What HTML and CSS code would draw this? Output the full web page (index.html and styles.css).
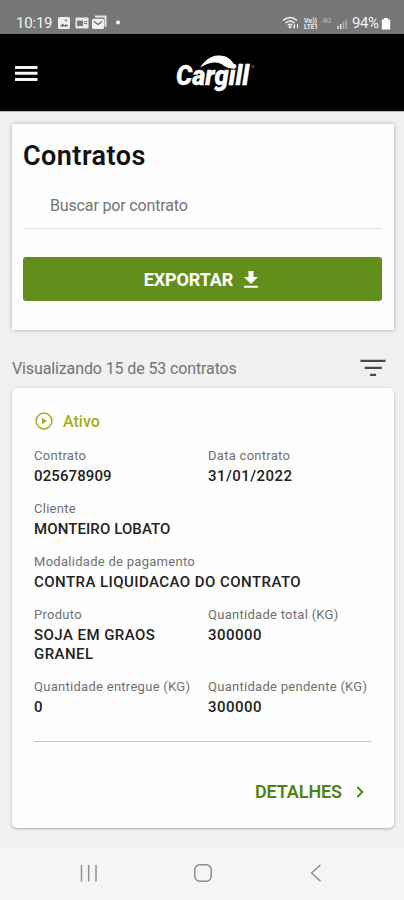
FILE: index.html
```html
<!DOCTYPE html>
<html lang="pt-BR">
<head>
<meta charset="UTF-8" />
<meta name="viewport" content="width=device-width, initial-scale=1" />
<title>Contratos</title>
<link rel="stylesheet" href="styles.css">
</head>
<body>

<div class="statusbar">
  <span class="clock">10:19</span>
  <svg class="status-icons" width="64" height="16" viewBox="0 0 64 16">
    <rect x="1" y="2" width="12" height="12" rx="1.5" fill="#eee" />
    <path d="M3 11.500l2.500-3 2 2 1.500-1.500 2.500 2.500z" fill="#666" />
    <circle cx="9" cy="5.500" r="1.100" fill="#777" />
    <rect x="18.500" y="2.500" width="13" height="11" rx="1" fill="#e8e8e8" />
    <path d="M20.500 6h5v4.500h-5zM27 6.500h3M27 8.500h3" fill="#777" stroke="#777" />
    <path d="M38 1.500h10.500v10" fill="none" stroke="#e8e8e8" stroke-width="2" />
    <rect x="35" y="3.800" width="12" height="10.200" rx="1.500" fill="#f2f2f2" />
    <path d="M37 6.500l4 3 4-3" fill="none" stroke="#666" stroke-width="1.300" />
    <circle cx="61" cy="7.500" r="2" fill="#fff" />
  </svg>
  <svg class="signal" width="68" height="16" viewBox="0 0 68 16">
    <g fill="none" stroke="#eee" stroke-width="1.500">
      <path d="M0 5.500q7-6 14 0M2.500 8q4.500-4 9 0M4.800 10.300q2.200-2 4.400 0" />
      <path d="M11.500 9v4M10 11.500l1.500 1.800M14.500 13v-4" stroke-width="1.100" />
    </g>
    <circle cx="7" cy="12" r="1.400" fill="#eee" />
    <text x="21" y="7.500" class="volte" textLength="13" lengthAdjust="spacingAndGlyphs">Vo))</text>
    <text x="21" y="14" class="volte" textLength="14" lengthAdjust="spacingAndGlyphs">LTE1</text>
    <text x="39.500" y="7.500" class="net" textLength="9" lengthAdjust="spacingAndGlyphs">4G</text>
    <path d="M55 11v3M57.700 9v5" stroke="#e0e0e0" stroke-width="1.600" />
    <path d="M60.500 6.500v7.500M63.200 4.500v9.500" stroke="#aaa" stroke-width="1.600" />
  </svg>
  <span class="percent">94%</span>
  <svg class="battery" width="10" height="12" viewBox="0 0 10 12">
    <path d="M3 0h4v1.500h2.200v10H.8v-10H3z" fill="#fff" />
  </svg>
</div>

<header class="topbar">
  <svg class="menu" width="23" height="17" viewBox="0 0 23 17">
    <path d="M0 2.400h22.500M0 8.300h22.500M0 14.600h22.500" stroke="#f4f4f4" stroke-width="3" />
  </svg>
  <svg class="logo" width="82" height="42" viewBox="0 0 82 42">
    <text x="1" y="32.800" class="logo-text" textLength="73" lengthAdjust="spacingAndGlyphs">Cargill</text>
    <path d="M25 15.500C30 8.500 35 3.900 43 3.500c9-.4 14.500 4 17.500 12.300-4.500 1.500-8 .4-12-2.400-4-2.800-7-3.400-11.500-2.700-4.500.8-7.500 2.500-12 4.800z" fill="#fff" />
    <circle cx="78" cy="14.500" r="1.100" fill="none" stroke="#777" stroke-width=".8" />
  </svg>
</header>

<main class="content">
  <section class="search-card">
    <h1>Contratos</h1>
    <div class="search"><span>Buscar por contrato</span></div>
    <button class="export"><span>EXPORTAR</span>
      <svg width="14" height="17" viewBox="0 0 14 17">
        <path d="M4.500 0h5v6H14l-7 7-7-7h4.500zM0 14.700h14v2H0z" fill="#fff" />
      </svg>
    </button>
  </section>

  <div class="summary">
    <span>Visualizando 15 de 53 contratos</span>
    <svg width="26" height="18" viewBox="0 0 26 18">
      <path d="M.5 1.800h25M4.800 8.800h17M10.200 15.800h5.800" stroke="#484848" stroke-width="2.300" />
    </svg>
  </div>

  <article class="contract">
    <div class="state">
      <svg width="18" height="18" viewBox="0 0 18 18">
        <circle cx="9" cy="9" r="7.900" fill="none" stroke="#a2ad1c" stroke-width="1.500" />
        <path d="M7 5.700v6.600l4.800-3.300z" fill="#a2ad1c" />
      </svg>
      <span>Ativo</span>
    </div>
    <dl class="fields">
      <div><dt>Contrato</dt><dd class="tight">025678909</dd></div>
      <div><dt>Data contrato</dt><dd>31/01/2022</dd></div>
      <div class="wide"><dt>Cliente</dt><dd class="tight">MONTEIRO LOBATO</dd></div>
      <div class="wide"><dt>Modalidade de pagamento</dt><dd>CONTRA LIQUIDACAO DO CONTRATO</dd></div>
      <div><dt>Produto</dt><dd>SOJA EM GRAOS<br>GRANEL</dd></div>
      <div><dt>Quantidade total (KG)</dt><dd>300000</dd></div>
      <div><dt>Quantidade entregue (KG)</dt><dd>0</dd></div>
      <div><dt>Quantidade pendente (KG)</dt><dd>300000</dd></div>
    </dl>
    <a class="details"><span>DETALHES</span>
      <svg width="8" height="12" viewBox="0 0 8 12">
        <path d="M1.300 1l5 5-5 5" fill="none" stroke="#4f8314" stroke-width="1.900" />
      </svg>
    </a>
  </article>
</main>

<nav class="navbar">
  <svg width="18" height="18" viewBox="0 0 18 18">
    <path d="M1.500 1v16.500M8.700 1v16.500M16 1v16.500" stroke="#909090" stroke-width="1.500" />
  </svg>
  <svg width="18" height="18" viewBox="0 0 18 18">
    <rect x=".8" y=".8" width="16.400" height="16.400" rx="5" fill="none" stroke="#8c8c8c" stroke-width="1.500" />
  </svg>
  <svg width="18" height="18" viewBox="0 0 18 18">
    <path d="M13.500 1l-9 8 9 8.300" fill="none" stroke="#8c8c8c" stroke-width="1.500" />
  </svg>
</nav>

</body>
</html>
```
FILE: styles.css
```css
* {
  box-sizing: border-box;
}

body {
  margin: 0;
  height: 900px;
  display: flex;
  flex-direction: column;
  overflow: hidden;
  background: #f0f0f0;
  font-family: Roboto, Arial, sans-serif;
}

svg {
  display: block;
  flex: none;
}

/* Phone status bar */
.statusbar {
  height: 34px;
  padding: 12px 13px 0 16px;
  display: flex;
  align-items: center;
  background: #777;
  color: #f2f2f2;
  font-size: 15px;
  line-height: 20px;
}
.clock {
  width: 41px;
  letter-spacing: -0.2px;
}
.signal {
  margin-left: auto;
}
.volte {
  font-size: 7px;
  font-weight: 700;
  fill: #eee;
}
.net {
  font-size: 7px;
  fill: #bbb;
}
.percent {
  margin-left: 1px;
  width: 29px;
  letter-spacing: -0.4px;
}
.battery {
  margin-top: 1px;
}

/* App header */
.topbar {
  height: 77px;
  padding: 0 15px;
  display: flex;
  align-items: center;
  background: #000;
}
.menu {
  margin-top: 2px;
}
.logo {
  margin-left: 137px;
}
.logo-text {
  font-family: Roboto, sans-serif;
  font-size: 27px;
  font-weight: 900;
  font-style: italic;
  fill: #fff;
  stroke: #fff;
  stroke-width: 0.3px;
}

.content {
  flex: 1;
  padding: 12px 10px 0 12px;
  border-top: 1px solid #b5b5b5;
}

/* Search card */
.search-card {
  height: 206px;
  padding: 15px 12px 0 11px;
  background: #fefefe;
  box-shadow: 0 0 4px rgba(0, 0, 0, 0.28);
}
h1 {
  margin: 0;
  font-size: 27px;
  line-height: 34px;
  font-weight: 600;
  letter-spacing: 0.45px;
  color: #111;
}
.search {
  height: 56px;
  padding: 21px 27px 0;
  border-bottom: 1px solid #e2e2e2;
  color: #747474;
  font-size: 16px;
  line-height: 24px;
  letter-spacing: -0.15px;
}
.export {
  width: 100%;
  height: 44px;
  margin-top: 28px;
  padding: 1px 0 0;
  display: flex;
  align-items: center;
  justify-content: center;
  gap: 11px;
  border: 0;
  border-radius: 3px;
  background: #628e1b;
  color: #fff;
  font: 700 18px/24px Roboto, Arial, sans-serif;
  letter-spacing: -0.1px;
}
.export svg {
  margin: 0 3px 1px 0;
}

.summary {
  height: 58px;
  padding: 18px 8px 0 0;
  display: flex;
  align-items: center;
  justify-content: space-between;
  color: #747474;
  font-size: 16px;
  letter-spacing: -0.12px;
}

/* Contract card */
.contract {
  height: 440px;
  padding: 23px 23px 0 22px;
  border-radius: 5px;
  background: #fefefe;
  box-shadow: 0 1px 3px rgba(0, 0, 0, 0.28);
}
.state {
  height: 20px;
  padding-left: 1px;
  display: flex;
  align-items: center;
  gap: 10px;
  color: #a2ad1c;
  font-size: 16px;
  font-weight: 500;
}
.fields {
  height: 311px;
  margin: 0;
  padding-top: 16px;
  display: grid;
  grid-template-columns: 174px 1fr;
  grid-template-rows: 53px 53px 53px 72px 50px;
  border-bottom: 1px solid #c4c4c4;
}
.wide {
  grid-column: span 2;
}
dt {
  color: #707070;
  font-size: 13px;
  line-height: 18px;
  letter-spacing: 0.28px;
  white-space: nowrap;
}
dd {
  margin: 0;
  padding-top: 2px;
  color: #222;
  font-size: 15px;
  font-weight: 500;
  line-height: 18.5px;
  letter-spacing: 0.45px;
}
.tight {
  letter-spacing: 0.1px;
}
.details {
  height: 99px;
  padding-right: 7px;
  display: flex;
  align-items: center;
  justify-content: flex-end;
  gap: 14px;
  color: #4f8314;
  font-size: 18px;
  font-weight: 600;
  letter-spacing: -0.1px;
}

/* System navigation */
.navbar {
  height: 52px;
  padding: 0 79px 3px 80px;
  display: flex;
  align-items: center;
  justify-content: space-between;
  background: #f5f5f5;
}
```
